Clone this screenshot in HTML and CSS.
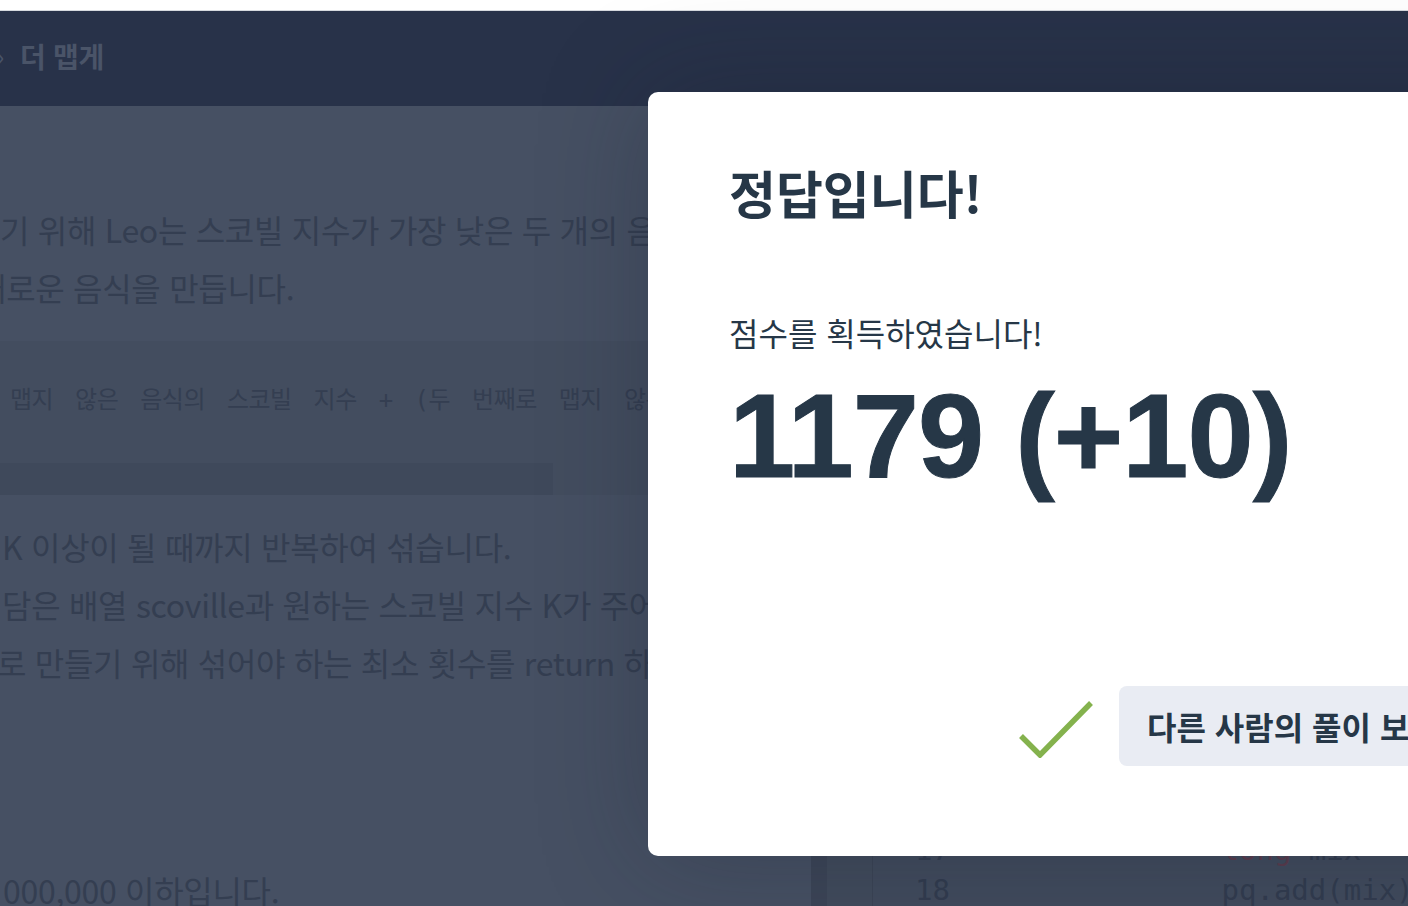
FILE: index.html
```html
<!DOCTYPE html>
<html lang="ko">
<head>
<meta charset="utf-8">
<title>더 맵게 - 정답입니다!</title>
<link rel="stylesheet" href="styles.css">
</head>
<body>
<div class="page">
  <div class="topbar"></div>
  <header class="header">
    <span class="crumb-sep">›</span>
    <span class="crumb-title">더 맵게</span>
  </header>
  <main class="main">
    <section class="desc">
      <div class="para">
        <div class="line">기 위해 Leo는 스코빌 지수가 가장 낮은 두 개의 음식을 아래와 같이 특별한 방법으로 섞어</div>
        <div class="line shift-sae">새로운 음식을 만듭니다.</div>
      </div>
      <div class="codebox">
        <div class="code-text">맵지 않은 음식의 스코빌 지수 + (두 번째로 맵지 않은 음식의 스코빌 지수 * 2)</div>
        <div class="hscroll"><div class="hthumb"></div></div>
      </div>
      <div class="para">
        <div class="line shift-k">K 이상이 될 때까지 반복하여 섞습니다.</div>
        <div class="line shift-k">담은 배열 scoville과 원하는 스코빌 지수 K가 주어질 때, 모든 음식의 스코빌 지수를 K 이상으로</div>
        <div class="line shift-ro">로 만들기 위해 섞어야 하는 최소 횟수를 return 하도록 solution 함수를 작성해주세요.</div>
      </div>
      <div class="para limits">
        <div class="line shift-zero">000,000 이하입니다.</div>
      </div>
    </section>
    <div class="resizer"></div>
    <section class="editor">
      <div class="gutter-side"></div>
      <div class="code-area">
        <div class="row"><span class="ln">1</span><span class="src"><span class="kw">import</span> java.util.*;</span></div>
        <div class="row"><span class="ln">2</span><span class="src"></span></div>
        <div class="row"><span class="ln">3</span><span class="src"><span class="kw">class</span> Solution {</span></div>
        <div class="row"><span class="ln">4</span><span class="src">    <span class="kw">public int</span> solution(<span class="kw">int</span>[] scoville, <span class="kw">int</span> K) {</span></div>
        <div class="row"><span class="ln">5</span><span class="src">        <span class="kw">int</span> answer = 0;</span></div>
        <div class="row"><span class="ln">6</span><span class="src">        PriorityQueue&lt;Long&gt; pq = <span class="kw">new</span> PriorityQueue&lt;&gt;();</span></div>
        <div class="row"><span class="ln">7</span><span class="src">        <span class="kw">for</span> (<span class="kw">int</span> s : scoville) {</span></div>
        <div class="row"><span class="ln">8</span><span class="src">            pq.add((<span class="kw">long</span>) s);</span></div>
        <div class="row"><span class="ln">9</span><span class="src">        }</span></div>
        <div class="row"><span class="ln">10</span><span class="src"></span></div>
        <div class="row"><span class="ln">11</span><span class="src">        <span class="kw">while</span> (pq.peek() &lt; K) {</span></div>
        <div class="row"><span class="ln">12</span><span class="src">            <span class="kw">if</span> (pq.size() &lt; 2) {</span></div>
        <div class="row"><span class="ln">13</span><span class="src">                <span class="kw">return</span> -1;</span></div>
        <div class="row"><span class="ln">14</span><span class="src">            }</span></div>
        <div class="row"><span class="ln">15</span><span class="src">            <span class="kw">long</span> a = pq.poll();</span></div>
        <div class="row"><span class="ln">16</span><span class="src">            <span class="kw">long</span> b = pq.poll();</span></div>
        <div class="row"><span class="ln">17</span><span class="src">            <span class="kw">long</span> mix = a + (b * 2);</span></div>
        <div class="row"><span class="ln">18</span><span class="src">            pq.add(mix);</span></div>
      </div>
    </section>
  </main>

  <div class="modal">
    <h1 class="modal-title">정답입니다!</h1>
    <p class="modal-sub">점수를 획득하였습니다!</p>
    <div class="modal-score">1179 (+10)</div>
    <div class="modal-actions">
      <svg class="check" width="80" height="64" viewBox="0 0 80 64" aria-hidden="true">
        <polyline points="5,42 24,61 75,9" fill="none" stroke="#84b24d" stroke-width="5.5" stroke-linecap="butt" stroke-linejoin="miter"/>
      </svg>
      <button class="btn-other">다른 사람의 풀이 보기</button>
    </div>
  </div>
</div>
</body>
</html>
```

FILE: styles.css
```css
* { box-sizing: border-box; }

html, body {
  margin: 0;
  padding: 0;
  width: 1408px;
  height: 906px;
  overflow: hidden;
  background: #ffffff;
  font-family: "Noto Sans CJK KR", "Noto Sans", sans-serif;
}

.page {
  position: relative;
  width: 1408px;
  height: 906px;
  overflow: hidden;
}

.topbar {
  height: 11px;
  background: #ffffff;
  border-bottom: 1px solid #d6d9de;
}

.header {
  height: 95px;
  background: #283249;
  display: flex;
  align-items: center;
  padding-bottom: 6px;
  color: #4a5468;
  font-weight: 700;
  font-size: 28px;
}

.crumb-sep {
  margin-left: -3px;
  font-weight: 400;
  font-size: 24px;
  width: 23px;
}

.crumb-title {
  letter-spacing: -0.3px;
}

.main {
  display: flex;
  height: 800px;
}

.desc {
  width: 811px;
  flex: none;
  background: #465063;
  overflow: hidden;
  padding-top: 94px;
  color: #343e51;
  font-size: 32px;
  letter-spacing: -0.3px;
}

.para .line {
  height: 58px;
  line-height: 58px;
  white-space: nowrap;
}

.shift-sae { margin-left: -23px; }
.shift-k { margin-left: 2px; }
.shift-ro { margin-left: -3px; }
.shift-zero { margin-left: 3px; }

.codebox {
  margin-top: 25px;
  background: #434d5f;
  width: 1100px;
}

.code-text {
  padding: 39px 0 43px 10px;
  height: 122px;
  line-height: 40px;
  white-space: nowrap;
  font-family: "DejaVu Sans Mono", "Noto Sans CJK KR", monospace;
  font-size: 24px;
  letter-spacing: -0.5px;
  word-spacing: 8px;
  color: #343e51;
}

.hscroll {
  height: 32px;
  background: #434d5f;
}

.hthumb {
  width: 553px;
  height: 32px;
  background: #3f495b;
}

.codebox + .para { margin-top: 22px; }

.limits { margin-top: 170px; }

.resizer {
  width: 16px;
  flex: none;
  background: #3c4557;
}

.editor {
  flex: 1;
  display: flex;
  background: #414b5d;
  overflow: hidden;
}

.gutter-side {
  width: 46px;
  flex: none;
  background: #414b5c;
  border-right: 1px solid #3b4455;
}

.code-area {
  padding-top: 84px;
  font-family: "DejaVu Sans Mono", monospace;
  font-size: 29px;
  color: #323c4f;
}

.row {
  display: flex;
  height: 40px;
  line-height: 40px;
  white-space: pre;
}

.ln {
  width: 77px;
  text-align: right;
  flex: none;
}

.src {
  padding-left: 62px;
}

.kw { color: #5a3c4d; }

/* modal */
.modal {
  position: absolute;
  left: 648px;
  top: 92px;
  width: 900px;
  height: 764px;
  background: #ffffff;
  border-radius: 10px;
  box-shadow: 0 0 110px rgba(22, 30, 44, 0.28);
  padding: 70px 81px 90px 81px;
  display: flex;
  flex-direction: column;
  color: #263747;
}

.modal-title {
  margin: 0;
  font-size: 51px;
  line-height: 60px;
  font-weight: 700;
  letter-spacing: 0;
}

.modal-sub {
  margin: 88px 0 0 0;
  font-size: 32px;
  line-height: 44px;
  font-weight: 400;
  letter-spacing: 0;
}

.modal-score {
  margin-top: 22px;
  font-family: "Liberation Sans", Arial, sans-serif;
  font-weight: 700;
  font-size: 119px;
  line-height: 120px;
  letter-spacing: -1px;
  -webkit-text-stroke: 1px #263747;
}

.modal-actions {
  margin-top: auto;
  display: flex;
  align-items: center;
  gap: 23px;
  padding-left: 287px;
}

.check { display: block; flex: none; }

.btn-other {
  flex: none;
  height: 80px;
  padding: 0 28px;
  border: none;
  border-radius: 8px;
  background: #e9ecf3;
  color: #263747;
  font-family: "Noto Sans CJK KR", "Noto Sans", sans-serif;
  font-size: 32px;
  font-weight: 700;
  letter-spacing: 0;
  white-space: nowrap;
}
```
